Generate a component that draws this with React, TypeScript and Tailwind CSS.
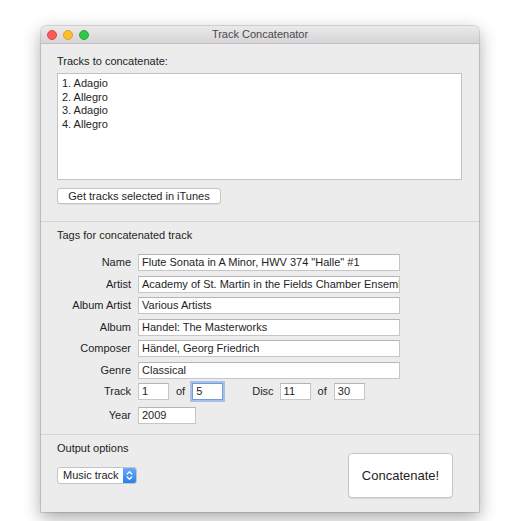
import React from "react";

const font = { fontFamily: '"Liberation Sans", Arial, sans-serif' };

function Field({ value, className = "", focused = false }: { value: string; className?: string; focused?: boolean }) {
  return (
    <div
      className={
        "h-[17px] bg-white border flex items-center pl-[3px] overflow-hidden whitespace-nowrap text-[11px] text-[#1e1e1e] leading-none " +
        (focused
          ? "border-[#6e9ee0] shadow-[0_0_0_2px_rgba(110,160,230,0.55)] "
          : "border-[#c6c6c6] border-t-[#b5b5b5] ") +
        className
      }
    >
      {value}
    </div>
  );
}

function Row({ label, children, className = "" }: { label: string; children: React.ReactNode; className?: string }) {
  return (
    <div className={"flex items-center " + className}>
      <div className="w-[74px] mr-[7px] text-right text-[11px] text-[#1e1e1e] leading-none">{label}</div>
      {children}
    </div>
  );
}

export default function App() {
  return (
    <div className="w-[507px] h-[521px] bg-white overflow-hidden" style={font}>
      <div className="ml-[41px] mt-[26px] w-[438px] h-[486px] rounded-t-[5px] bg-[#ececec] shadow-[0_6px_18px_rgba(0,0,0,0.35),0_0_0_1px_rgba(0,0,0,0.12)] flex flex-col overflow-hidden">
        {/* Title bar */}
        <div className="relative h-[18px] shrink-0 bg-gradient-to-b from-[#ebe9eb] to-[#d6d4d6] border-b border-[#bfbfbf] flex items-center justify-center">
          <div className="absolute left-[6px] top-[4px] flex gap-[6px]">
            <div className="w-[10px] h-[10px] rounded-full bg-[#fc5b57] border border-[#e0443e]" />
            <div className="w-[10px] h-[10px] rounded-full bg-[#fdbd2e] border border-[#dea123]" />
            <div className="w-[10px] h-[10px] rounded-full bg-[#33c748] border border-[#27aa35]" />
          </div>
          <div className="text-[11px] text-[#4a4a4a] leading-none">Track Concatenator</div>
        </div>

        {/* Section 1 */}
        <div className="pl-[16px] pr-[17px] pt-[11px] pb-[17px] border-b border-[#d6d6d6]">
          <div className="text-[11px] text-[#1e1e1e] leading-[13px]">Tracks to concatenate:</div>
          <div className="mt-[5px] h-[107px] bg-white border border-[#c2c2c2] pt-[3px] pl-[4px] text-[11px] text-[#1e1e1e] leading-[13.5px]">
            <div>1. Adagio</div>
            <div>2. Allegro</div>
            <div>3. Adagio</div>
            <div>4. Allegro</div>
          </div>
          <div className="mt-[8px] w-[164px] h-[16px] bg-white border border-[#c4c4c4] rounded-[3px] shadow-[0_1px_0_rgba(0,0,0,0.06)] flex items-center justify-center text-[11px] text-[#1e1e1e] leading-none">
            Get tracks selected in iTunes
          </div>
        </div>

        {/* Section 2 */}
        <div className="pl-[16px] pt-[7px] pb-[10px] border-b border-[#d6d6d6]">
          <div className="text-[11px] text-[#1e1e1e] leading-[13px]">Tags for concatenated track</div>
          <div className="mt-[12px] flex flex-col gap-[4.5px]">
            <Row label="Name"><Field value={'Flute Sonata in A Minor, HWV 374 "Halle" #1'} className="w-[262px]" /></Row>
            <Row label="Artist"><Field value="Academy of St. Martin in the Fields Chamber Ensemble" className="w-[262px]" /></Row>
            <Row label="Album Artist"><Field value="Various Artists" className="w-[262px]" /></Row>
            <Row label="Album"><Field value="Handel: The Masterworks" className="w-[262px]" /></Row>
            <Row label="Composer"><Field value="Händel, Georg Friedrich" className="w-[262px]" /></Row>
            <Row label="Genre"><Field value="Classical" className="w-[262px]" /></Row>
            <Row label="Track">
              <Field value="1" className="w-[31px]" />
              <span className="mx-[7px] text-[11px] text-[#1e1e1e] leading-none">of</span>
              <Field value="5" className="w-[31px]" focused />
              <span className="ml-[29px] mr-[6px] text-[11px] text-[#1e1e1e] leading-none">Disc</span>
              <Field value="11" className="w-[31px]" />
              <span className="mx-[7px] text-[11px] text-[#1e1e1e] leading-none">of</span>
              <Field value="30" className="w-[31px]" />
            </Row>
            <Row label="Year" className="mt-[2.5px]"><Field value="2009" className="w-[58px]" /></Row>
          </div>
        </div>

        {/* Section 3 */}
        <div className="pl-[16px] pr-[26px] flex justify-between items-start">
          <div className="pt-[7px]">
            <div className="text-[11px] text-[#1e1e1e] leading-[13px]">Output options</div>
            <div className="mt-[12px] w-[80px] h-[17px] flex rounded-[3px] border border-[#c4c4c4] bg-white overflow-hidden">
              <div className="flex-1 flex items-center pl-[5px] text-[11px] text-[#1e1e1e] leading-none">Music track</div>
              <div className="w-[13px] h-full bg-gradient-to-b from-[#67aaf8] to-[#2b7fea] flex items-center justify-center">
                <svg width="7" height="11" viewBox="0 0 7 11" fill="none" stroke="white" strokeWidth="1.3" strokeLinecap="round" strokeLinejoin="round">
                  <path d="M1.2 4 L3.5 1.7 L5.8 4" />
                  <path d="M1.2 7 L3.5 9.3 L5.8 7" />
                </svg>
              </div>
            </div>
          </div>
          <div className="mt-[18px] w-[105px] h-[45px] bg-white border border-[#c6c6c6] rounded-[4px] shadow-[0_1px_1px_rgba(0,0,0,0.08)] flex items-center justify-center text-[13px] text-[#1e1e1e] leading-none">
            Concatenate!
          </div>
        </div>
      </div>
    </div>
  );
}
